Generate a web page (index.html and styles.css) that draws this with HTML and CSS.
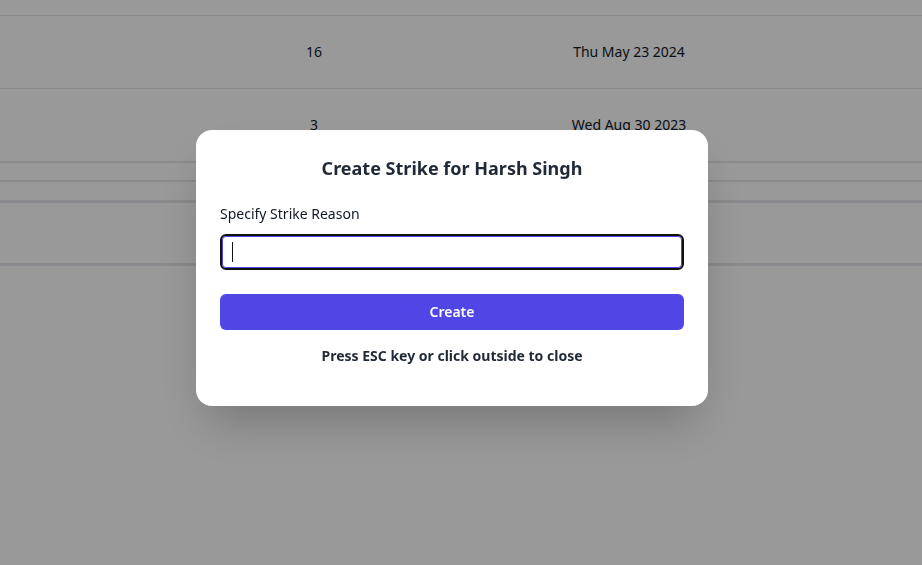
FILE: index.html
```html
<!DOCTYPE html>
<html lang="en">
<head>
<meta charset="utf-8">
<title>Create Strike</title>
<link rel="stylesheet" href="styles.css">
</head>
<body>
<main class="page">
  <div class="table">
    <div class="head"></div>
    <div class="row">
      <div class="cell"></div>
      <div class="cell">16</div>
      <div class="cell">Thu May 23 2024</div>
      <div class="cell"></div>
    </div>
    <div class="row row-last">
      <div class="cell"></div>
      <div class="cell">3</div>
      <div class="cell">Wed Aug 30 2023</div>
      <div class="cell"></div>
    </div>
    <div class="gap-a"></div>
    <div class="gap-b"></div>
    <div class="gap-c"></div>
  </div>
</main>
<div class="overlay">
  <div class="modal">
    <h2 class="title">Create Strike for Harsh Singh</h2>
    <label class="label" for="reason">Specify Strike Reason</label>
    <div class="field">
      <span class="caret"></span>
      <input id="reason" class="input" type="text">
    </div>
    <button class="btn" type="button">Create</button>
    <p class="hint">Press ESC key or click outside to close</p>
  </div>
</div>
</body>
</html>
```

FILE: styles.css
```css
* { box-sizing: border-box; }
html, body { margin: 0; padding: 0; }
body {
  background: #ffffff;
  font-family: "Noto Sans", "Open Sans", sans-serif;
  color: #1f2937;
  width: 922px;
  height: 565px;
  overflow: hidden;
}
.table { display: flex; flex-direction: column; }
.head {
  height: 16px;
  border-bottom: 1px solid #e5e7eb;
}
.row {
  display: grid;
  grid-template-columns: 236px 156px 474px 1fr;
  height: 73px;
  align-items: center;
  border-bottom: 1px solid #e5e7eb;
  font-size: 14px;
  line-height: 20px;
  color: #111827;
}
.cell { text-align: center; padding-bottom: 1px; }
.row-last { border-bottom: 2px solid #e5e7eb; height: 74px; }
.gap-a { height: 19px; border-bottom: 2px solid #e5e7eb; }
.gap-b { height: 21px; border-bottom: 3px solid #e5e7eb; }
.gap-c { height: 63px; border-bottom: 3px solid #e5e7eb; }

.overlay {
  position: fixed;
  inset: 0;
  background: rgba(0, 0, 0, 0.4);
  display: flex;
  justify-content: center;
  align-items: flex-start;
  padding-top: 130px;
  padding-right: 18px;
}
.modal {
  width: 512px;
  background: #ffffff;
  border-radius: 16px;
  padding: 24px 24px 40px;
  display: flex;
  flex-direction: column;
  box-shadow: 0 25px 50px -12px rgba(0, 0, 0, 0.25);
}
.title {
  margin: 0;
  font-size: 18px;
  line-height: 28px;
  font-weight: 700;
  text-align: center;
  color: #1f2937;
}
.label {
  margin-top: 22px;
  font-size: 14px;
  line-height: 20px;
  color: #111827;
}
.field {
  position: relative;
  margin-top: 10px;
  height: 36px;
}
.input {
  width: 100%;
  height: 36px;
  border: 2px solid #111111;
  border-radius: 6px;
  box-shadow: inset 0 0 0 1px #4f46e5;
  outline: none;
  padding: 0 12px;
  font-family: inherit;
  font-size: 14px;
  caret-color: transparent;
  background: #fff;
}
.caret {
  position: absolute;
  left: 12px;
  top: 8px;
  width: 1px;
  height: 20px;
  background: #111111;
  z-index: 1;
}
.btn {
  margin-top: 24px;
  height: 36px;
  border: 0;
  border-radius: 6px;
  background: #4f46e5;
  color: #ffffff;
  font-family: inherit;
  font-size: 14px;
  font-weight: 600;
  line-height: 20px;
  padding: 8px 0;
}
.hint {
  margin: 16px 0 0;
  font-size: 14px;
  line-height: 20px;
  font-weight: 700;
  text-align: center;
  color: #1f2937;
}
```
